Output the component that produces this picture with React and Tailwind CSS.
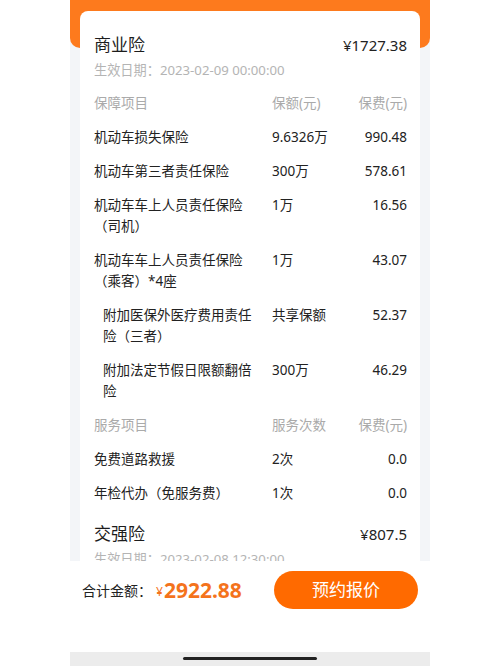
import React from "react";

const rows = [
  { type: "head", a: "保障项目", b: "保额(元)", c: "保费(元)" },
  { a: "机动车损失保险", b: "9.6326万", c: "990.48" },
  { a: "机动车第三者责任保险", b: "300万", c: "578.61" },
  { a: "机动车车上人员责任保险（司机）", b: "1万", c: "16.56" },
  { a: "机动车车上人员责任保险（乘客）*4座", b: "1万", c: "43.07" },
  { a: "附加医保外医疗费用责任险（三者）", b: "共享保额", c: "52.37", indent: true },
  { a: "附加法定节假日限额翻倍险", b: "300万", c: "46.29", indent: true },
  { type: "head", a: "服务项目", b: "服务次数", c: "保费(元)" },
  { a: "免费道路救援", b: "2次", c: "0.0" },
  { a: "年检代办（免服务费）", b: "1次", c: "0.0" },
];

export default function App() {
  return (
    <div
      className="w-[500px] h-[666px] bg-white flex justify-center overflow-hidden"
      style={{ fontFamily: '"Noto Sans", "Noto Sans CJK SC", sans-serif' }}
    >
      <div className="w-[360px] h-full flex flex-col bg-[#f3f5f8]">
        <div className="h-[48px] shrink-0 bg-[#fd7a1d] rounded-b-[10px]" />
        <div className="-mt-[37px] mx-[10px] h-[550px] shrink-0 bg-white rounded-t-[8px] overflow-hidden pl-[14px] pr-[13px] pt-[22px]">
          <div className="flex justify-between items-center leading-[24px]">
            <span className="text-[17px] text-[#1c1c1c]">商业险</span>
            <span className="text-[15px] text-[#222]">¥1727.38</span>
          </div>
          <div className="mt-[3px] text-[13.2px] leading-[20px] text-[#b4b4b4]">
            生效日期：2023-02-09 00:00:00
          </div>
          <div className="mt-[13px] flex flex-col gap-[13px] text-[13.5px] leading-[21px]">
            {rows.map((r, i) => (
              <div
                key={i}
                className={
                  "grid grid-cols-[164px_1fr_auto] gap-x-[14px] " +
                  (r.type === "head" ? "text-[#aaaaaa]" : "text-[#222222]")
                }
              >
                <div className={r.indent ? "pl-[9px]" : ""}>{r.a}</div>
                <div>{r.b}</div>
                <div className="text-right">{r.c}</div>
              </div>
            ))}
          </div>
          <div className="mt-[18px] flex justify-between items-center leading-[24px]">
            <span className="text-[17px] text-[#1c1c1c]">交强险</span>
            <span className="text-[15px] text-[#222]">¥807.5</span>
          </div>
          <div className="mt-[3px] text-[13.2px] leading-[20px] text-[#b4b4b4]">
            生效日期：2023-02-08 12:30:00
          </div>
        </div>
        <div className="flex-1 bg-white flex items-start pt-[10px] pl-[12px] pr-[12px]">
          <div className="flex items-center h-[38px] flex-1">
            <span className="text-[14px] text-[#222]">合计金额：</span>
            <span className="ml-[4px] text-[12px] text-[#f4731c] mt-[4px]">¥</span>
            <span className="ml-[1px] text-[21px] font-bold text-[#f4731c] leading-none">2922.88</span>
          </div>
          <button className="w-[144px] h-[38px] rounded-full bg-[#ff6a00] text-white text-[17px]">
            预约报价
          </button>
        </div>
        <div className="h-[14px] shrink-0 bg-[#ececec] flex justify-center pt-[5px]">
          <div className="w-[134px] h-[3px] rounded-full bg-[#222]" />
        </div>
      </div>
    </div>
  );
}
